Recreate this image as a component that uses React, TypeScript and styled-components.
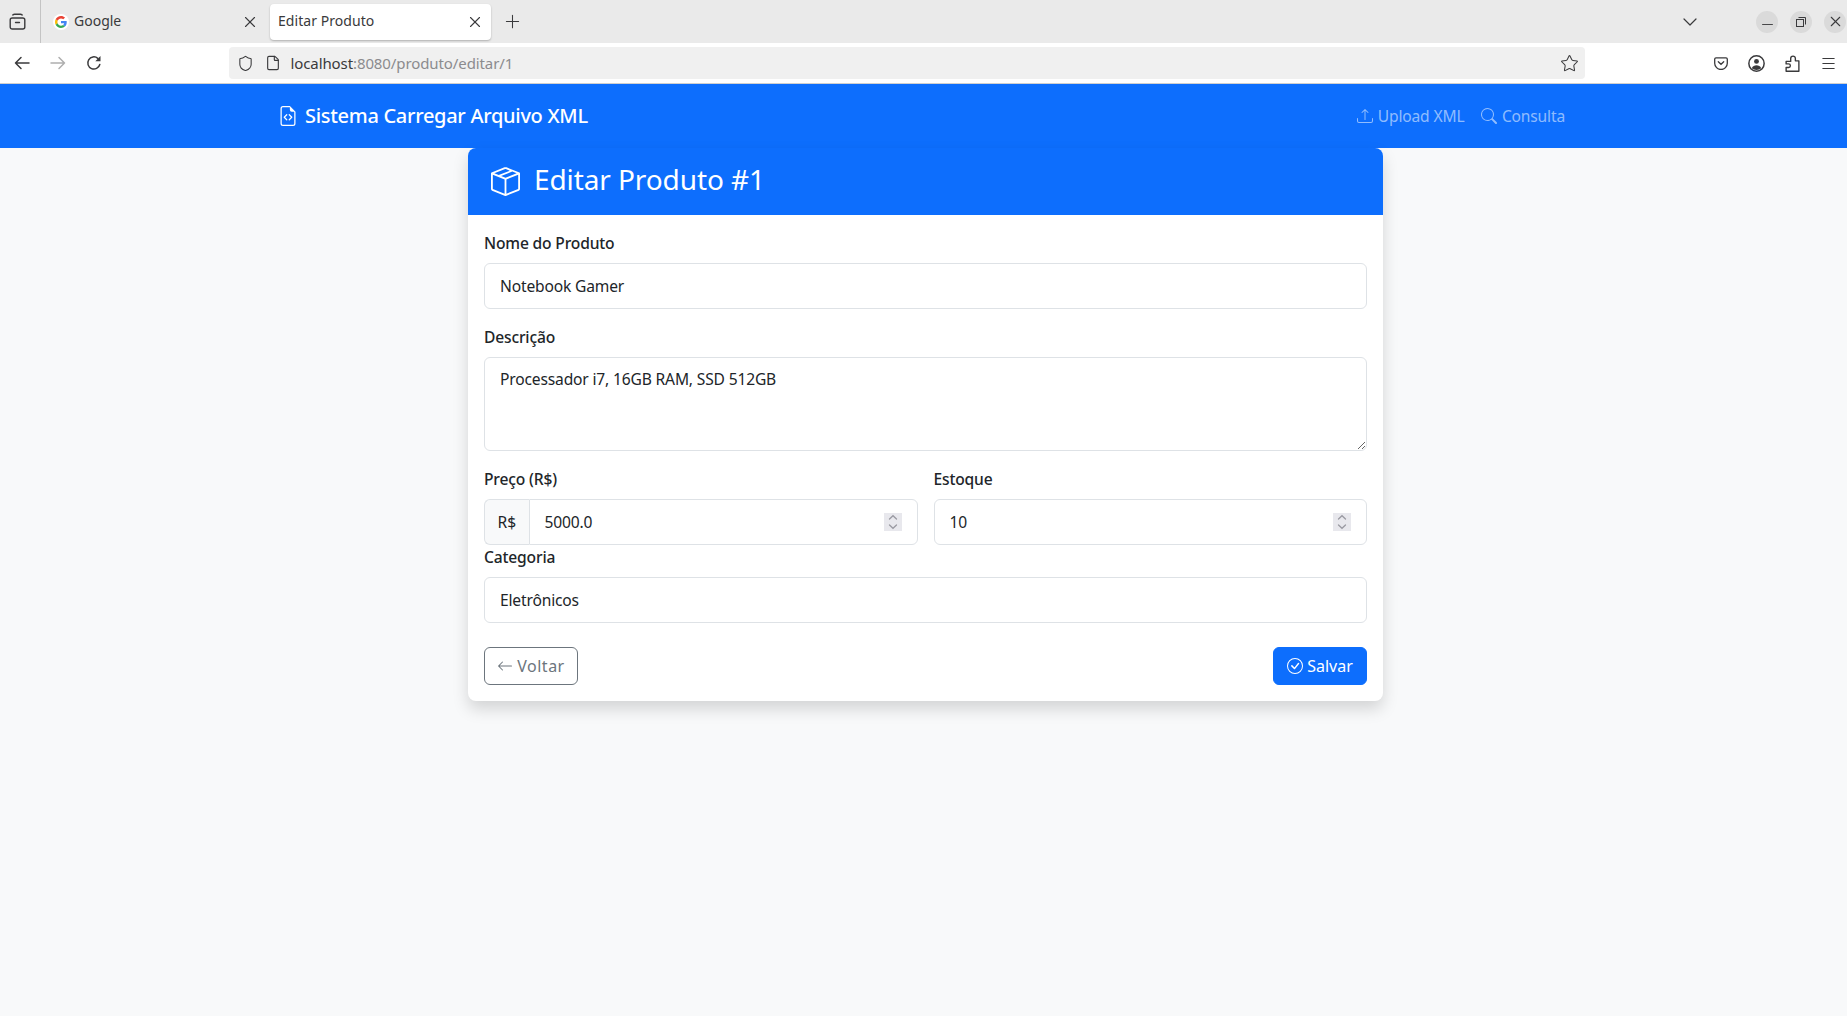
import { createGlobalStyle, styled } from "styled-components";
import {
  BsArrowLeft,
  BsBoxSeam,
  BsCheckCircle,
  BsFileEarmarkCode,
  BsSearch,
  BsUpload,
} from "react-icons/bs";
import { ChevronDown, File, Menu, Minus, Plus, Shield, Star, X } from "lucide-react";

const GlobalStyle = createGlobalStyle`
  * {
    box-sizing: border-box;
  }
  body {
    margin: 0;
    height: 1016px;
    overflow: hidden;
    background: #f8f9fa;
    color: #212529;
    font-family: "Noto Sans", "Liberation Sans", sans-serif;
    font-size: 15.6px;
    letter-spacing: -0.166px;
    line-height: 24px;
  }
`;

const TabStrip = styled.div`
  height: 43px;
  background: #eaeaea;
  display: flex;
  align-items: center;
  color: #3a3a3c;
`;
const TabListButton = styled.div`
  width: 41px;
  height: 43px;
  border-right: 1px solid #c4c4c4;
  display: flex;
  align-items: center;
  justify-content: center;
  padding-right: 5px;
`;
type TabProps = { $active?: boolean };
const Tab = styled.div<TabProps>`
  height: 36px;
  width: ${(props) => (props.$active ? "221px" : "229px")};
  padding: ${(props) => (props.$active ? "0 7.5px 0 8px" : "0 11px 0 12px")};
  display: flex;
  align-items: center;
  font-size: 14px;
  letter-spacing: ${(props) => (props.$active ? "0.05px" : "0")};
  border-radius: 4px;
  background: ${(props) => (props.$active ? "#fff" : "transparent")};
  box-shadow: ${(props) =>
    props.$active ? "0 1px 2px rgba(0, 0, 0, 0.25)" : "none"};
`;
const TabTitle = styled.span`
  flex: 1;
  padding-bottom: 2px;
`;
const Favicon = styled.span`
  width: 16px;
  height: 16px;
  margin-right: 5px;
  border-radius: 50%;
  background: #fff;
  display: flex;
  align-items: center;
  justify-content: center;
`;
const StripSpacer = styled.div`
  flex: 1;
`;
const NewTab = styled.div`
  margin-left: 10.5px;
  display: flex;
`;
const WindowButtons = styled.div`
  display: flex;
  margin: 0 1px 0 42px;
`;
const WindowButton = styled.div`
  width: 22px;
  height: 22px;
  margin-left: 12px;
  border-radius: 50%;
  background: #dadada;
  display: flex;
  align-items: center;
  justify-content: center;
`;
const MinimizeGlyph = styled(Minus)`
  margin-top: 5px;
`;

const Toolbar = styled.div`
  height: 41px;
  background: #fff;
  border-bottom: 1px solid #cfcfcf;
  display: flex;
  align-items: center;
  color: #3a3a3c;
  padding-left: 14px;
`;
const NavIcons = styled.div`
  display: flex;
  gap: 20px;
  width: 215px;
`;
const UrlBar = styled.div`
  width: 1355.5px;
  height: 32px;
  background: #f0f0f0;
  border-radius: 4px;
  display: flex;
  align-items: center;
  padding: 0 6px 0 7.5px;
  font-size: 15px;
  letter-spacing: -0.1px;
`;
const UrlIcons = styled.div`
  display: flex;
  gap: 11px;
  margin-right: 10px;
`;
const UrlHost = styled.span`
  color: #3a3a3c;
`;
const UrlPath = styled.span`
  color: #8b8b8e;
  flex: 1;
`;
const ToolIcons = styled.div`
  display: flex;
  align-items: center;
  gap: 20px;
  margin-left: 129px;
`;

const Navbar = styled.nav`
  height: 64px;
  background: #0d6efd;
  display: flex;
  align-items: center;
  justify-content: space-between;
  padding: 0 282px 0 278px;
`;
const Brand = styled.div`
  display: flex;
  align-items: center;
  gap: 7px;
  color: #fff;
  font-size: 20px;
  letter-spacing: -0.3px;
  font-weight: 500;
`;
const NavLinks = styled.div`
  display: flex;
  gap: 17px;
`;
const NavLink = styled.a`
  display: flex;
  align-items: center;
  gap: 4.5px;
  color: rgba(255, 255, 255, 0.55);
`;

const Card = styled.main`
  width: 915px;
  margin-left: 468px;
  background: #fff;
  border-radius: 8px;
  box-shadow: 0 8px 16px rgba(0, 0, 0, 0.15);
`;
const CardHeader = styled.header`
  height: 66.5px;
  background: #0d6efd;
  color: #fff;
  border-radius: 8px 8px 0 0;
  padding: 0 23px;
  display: flex;
  align-items: center;
  gap: 14px;
`;
const CardTitle = styled.h1`
  margin: 0;
  padding-bottom: 5px;
  font-size: 28px;
  letter-spacing: -0.1px;
  font-weight: 400;
  line-height: 34px;
`;
const CardBody = styled.form`
  padding: 16.8px 16px 16px;
`;
const Field = styled.div`
  margin-bottom: 16px;
`;
const Label = styled.label`
  display: block;
  margin-bottom: 8px;
  font-weight: 500;
`;
const TextInput = styled.input`
  display: block;
  width: 100%;
  height: 45.6px;
  padding: 0 15px;
  background: #fff;
  border: 1px solid #dee2e6;
  border-radius: 6px;
  color: #212529;
  font: inherit;
  letter-spacing: inherit;
  outline: none;
`;
const TextArea = styled.textarea`
  display: block;
  width: 100%;
  height: 94.6px;
  padding: 9.6px 15px;
  background: #fff;
  border: 1px solid #dee2e6;
  border-radius: 6px;
  color: #212529;
  font: inherit;
  letter-spacing: inherit;
  outline: none;
`;
const TwoColumns = styled.div`
  display: grid;
  grid-template-columns: 1fr 1fr;
  gap: 16px;
`;
const InputGroup = styled.div`
  position: relative;
  display: flex;
`;
const Addon = styled.span`
  width: 44.5px;
  height: 45.6px;
  flex: none;
  display: flex;
  align-items: center;
  justify-content: center;
  background: #f8f9fa;
  border: 1px solid #dee2e6;
  border-right: 0;
  border-radius: 6px 0 0 6px;
`;
const GroupInput = styled(TextInput)`
  border-radius: 0 6px 6px 0;
`;
const Spinner = styled.span`
  position: absolute;
  right: 16px;
  top: 14px;
  width: 18px;
  height: 18px;
  background: #e8e8ed;
  display: flex;
  align-items: center;
  justify-content: center;
`;
const Actions = styled.div`
  margin-top: 24px;
  display: flex;
  justify-content: space-between;
`;
type ButtonProps = { $primary?: boolean };
const Button = styled.button<ButtonProps>`
  width: 94px;
  height: 38px;
  padding: 0;
  display: flex;
  align-items: center;
  justify-content: center;
  gap: 4px;
  border-radius: 6px;
  font: inherit;
  font-size: 16px;
  letter-spacing: ${(props) => (props.$primary ? "0" : "0.5px")};
  border: 1px solid ${(props) => (props.$primary ? "#0d6efd" : "#6c757d")};
  background: ${(props) => (props.$primary ? "#0d6efd" : "transparent")};
  color: ${(props) => (props.$primary ? "#fff" : "#6c757d")};
`;

const GoogleLogo = () => (
  <svg width="12" height="12" viewBox="0 0 48 48">
    <path fill="#EA4335" d="M24 9.5c3.500 0 6.700 1.200 9.200 3.600l6.900-6.900C35.900 2.400 30.500 0 24 0 14.600 0 6.500 5.400 2.600 13.200l8 6.200C12.500 13.600 17.800 9.500 24 9.500z" />
    <path fill="#4285F4" d="M46.900 24.500c0-1.600-.1-3.100-.4-4.500H24v9h12.900c-.6 3-2.200 5.500-4.700 7.200l7.700 6c4.500-4.200 7-10.300 7-17.700z" />
    <path fill="#FBBC05" d="M10.500 28.600c-.5-1.400-.8-3-.8-4.600s.3-3.200.8-4.600l-8-6.200C.9 16.500 0 20.100 0 24s.9 7.500 2.600 10.800l7.900-6.200z" />
    <path fill="#34A853" d="M24 48c6.500 0 11.900-2.100 15.900-5.800l-7.700-6c-2.200 1.400-4.900 2.300-8.200 2.300-6.200 0-11.500-4.200-13.400-9.800l-8 6.200C6.500 42.600 14.600 48 24 48z" />
  </svg>
);

const TabsIcon = () => (
  <svg width="17" height="17" viewBox="0 0 17 17" fill="none" stroke="currentColor" strokeWidth="1.400">
    <path d="M3.500 2.500C3.800 1.500 4.500 1.200 5.500 1.200h6c1 0 1.700.3 2 1.300" />
    <rect x="1.200" y="5" width="14.600" height="11" rx="2" />
    <path d="M6.500 9.500h4" strokeLinecap="round" />
  </svg>
);

const BackIcon = () => (
  <svg width="16" height="16" viewBox="0 0 16 16" fill="none" stroke="currentColor" strokeWidth="1.500" strokeLinecap="round" strokeLinejoin="round">
    <path d="M15 8H1.500M7 2.500 1.500 8 7 13.500" />
  </svg>
);

const ForwardIcon = () => (
  <svg width="16" height="16" viewBox="0 0 16 16" fill="none" stroke="#aeaeae" strokeWidth="1.500" strokeLinecap="round" strokeLinejoin="round">
    <path d="M1 8h13.500M9 2.500 14.500 8 9 13.500" />
  </svg>
);

const ReloadIcon = () => (
  <svg width="16" height="16" viewBox="0 0 16 16" fill="none" stroke="currentColor" strokeWidth="1.500">
    <path d="M13.800 9.500A6.100 6.100 0 1 1 11.800 3.300" strokeLinecap="round" />
    <path d="M14.500 1v5.200H9.300z" fill="currentColor" stroke="none" />
  </svg>
);

const PocketIcon = () => (
  <svg width="14" height="13" viewBox="0 0 14 13" fill="none" stroke="currentColor" strokeWidth="1.300">
    <path d="M2 .8h10A1.300 1.300 0 0 1 13.300 2v4.200a6.300 6.300 0 0 1-12.600 0V2A1.300 1.300 0 0 1 2 .8z" />
    <path d="M4.300 4.800 7 7.300l2.700-2.500" strokeLinecap="round" />
  </svg>
);

const AvatarIcon = () => (
  <svg width="17" height="17" viewBox="0 0 16 16" fill="none" stroke="currentColor" strokeWidth="1.400">
    <circle cx="8" cy="8" r="7.200" />
    <circle cx="8" cy="6" r="2.300" fill="currentColor" stroke="none" />
    <path d="M3.500 12.400c1-2 2.600-2.700 4.500-2.700s3.500.7 4.500 2.700A6.800 6.800 0 0 1 3.500 12.400z" fill="currentColor" stroke="none" />
  </svg>
);

const ExtensionIcon = () => (
  <svg width="15" height="17" viewBox="0 0 14 16" fill="none" stroke="currentColor" strokeWidth="1.300" strokeLinejoin="round">
    <path d="M1 6h4.300V3.300a2.200 2.200 0 0 1 4.400 0V5.500H13v9.800H1v-3.500h2.300a1.700 1.700 0 0 0 0-3.400H1z" />
  </svg>
);

const RestoreIcon = () => (
  <svg width="10" height="10" viewBox="0 0 10 10" fill="none" stroke="#3a3a3c" strokeWidth="1">
    <rect x="0.5" y="2.500" width="7" height="7" />
    <path d="M2.500.5h7v7" />
  </svg>
);

const SpinArrows = () => (
  <svg width="10" height="16" viewBox="0 0 10 16" fill="none" stroke="#9a9aa2" strokeWidth="1.300" strokeLinecap="round">
    <path d="M1.500 5 5 1.700 8.500 5M1.500 11 5 14.300 8.500 11" />
  </svg>
);

export default function App() {
  return (
    <>
      <GlobalStyle />
      <TabStrip>
        <TabListButton>
          <TabsIcon />
        </TabListButton>
        <Tab>
          <Favicon>
            <GoogleLogo />
          </Favicon>
          <TabTitle>Google</TabTitle>
          <X size={18} strokeWidth={1.500} />
        </Tab>
        <Tab $active>
          <TabTitle>Editar Produto</TabTitle>
          <X size={18} strokeWidth={1.500} />
        </Tab>
        <NewTab>
          <Plus size={21} strokeWidth={1.200} />
        </NewTab>
        <StripSpacer />
        <ChevronDown size={24} strokeWidth={1.200} />
        <WindowButtons>
          <WindowButton>
            <MinimizeGlyph size={17} strokeWidth={1.300} />
          </WindowButton>
          <WindowButton>
            <RestoreIcon />
          </WindowButton>
          <WindowButton>
            <X size={17} strokeWidth={1.500} />
          </WindowButton>
        </WindowButtons>
      </TabStrip>
      <Toolbar>
        <NavIcons>
          <BackIcon />
          <ForwardIcon />
          <ReloadIcon />
        </NavIcons>
        <UrlBar>
          <UrlIcons>
            <Shield size={17} strokeWidth={1.500} />
            <File size={16} strokeWidth={1.700} />
          </UrlIcons>
          <UrlHost>localhost</UrlHost>
          <UrlPath>:8080/produto/editar/1</UrlPath>
          <Star size={19} strokeWidth={1.300} />
        </UrlBar>
        <ToolIcons>
          <PocketIcon />
          <AvatarIcon />
          <ExtensionIcon />
          <Menu size={17} strokeWidth={1.500} />
        </ToolIcons>
      </Toolbar>
      <Navbar>
        <Brand>
          <BsFileEarmarkCode size={20} />
          Sistema Carregar Arquivo XML
        </Brand>
        <NavLinks>
          <NavLink>
            <BsUpload size={16} />
            Upload XML
          </NavLink>
          <NavLink>
            <BsSearch size={16} />
            Consulta
          </NavLink>
        </NavLinks>
      </Navbar>
      <Card>
        <CardHeader>
          <BsBoxSeam size={29} />
          <CardTitle>Editar Produto #1</CardTitle>
        </CardHeader>
        <CardBody>
          <Field>
            <Label>Nome do Produto</Label>
            <TextInput defaultValue="Notebook Gamer" />
          </Field>
          <Field>
            <Label>Descrição</Label>
            <TextArea defaultValue="Processador i7, 16GB RAM, SSD 512GB" />
          </Field>
          <TwoColumns>
            <div>
              <Label>Preço (R$)</Label>
              <InputGroup>
                <Addon>R$</Addon>
                <GroupInput defaultValue="5000.0" />
                <Spinner>
                  <SpinArrows />
                </Spinner>
              </InputGroup>
            </div>
            <div>
              <Label>Estoque</Label>
              <InputGroup>
                <TextInput defaultValue="10" />
                <Spinner>
                  <SpinArrows />
                </Spinner>
              </InputGroup>
            </div>
          </TwoColumns>
          <div>
            <Label>Categoria</Label>
            <TextInput defaultValue="Eletrônicos" />
          </div>
          <Actions>
            <Button type="button">
              <BsArrowLeft size={16} />
              Voltar
            </Button>
            <Button type="button" $primary>
              <BsCheckCircle size={16} />
              Salvar
            </Button>
          </Actions>
        </CardBody>
      </Card>
    </>
  );
}
